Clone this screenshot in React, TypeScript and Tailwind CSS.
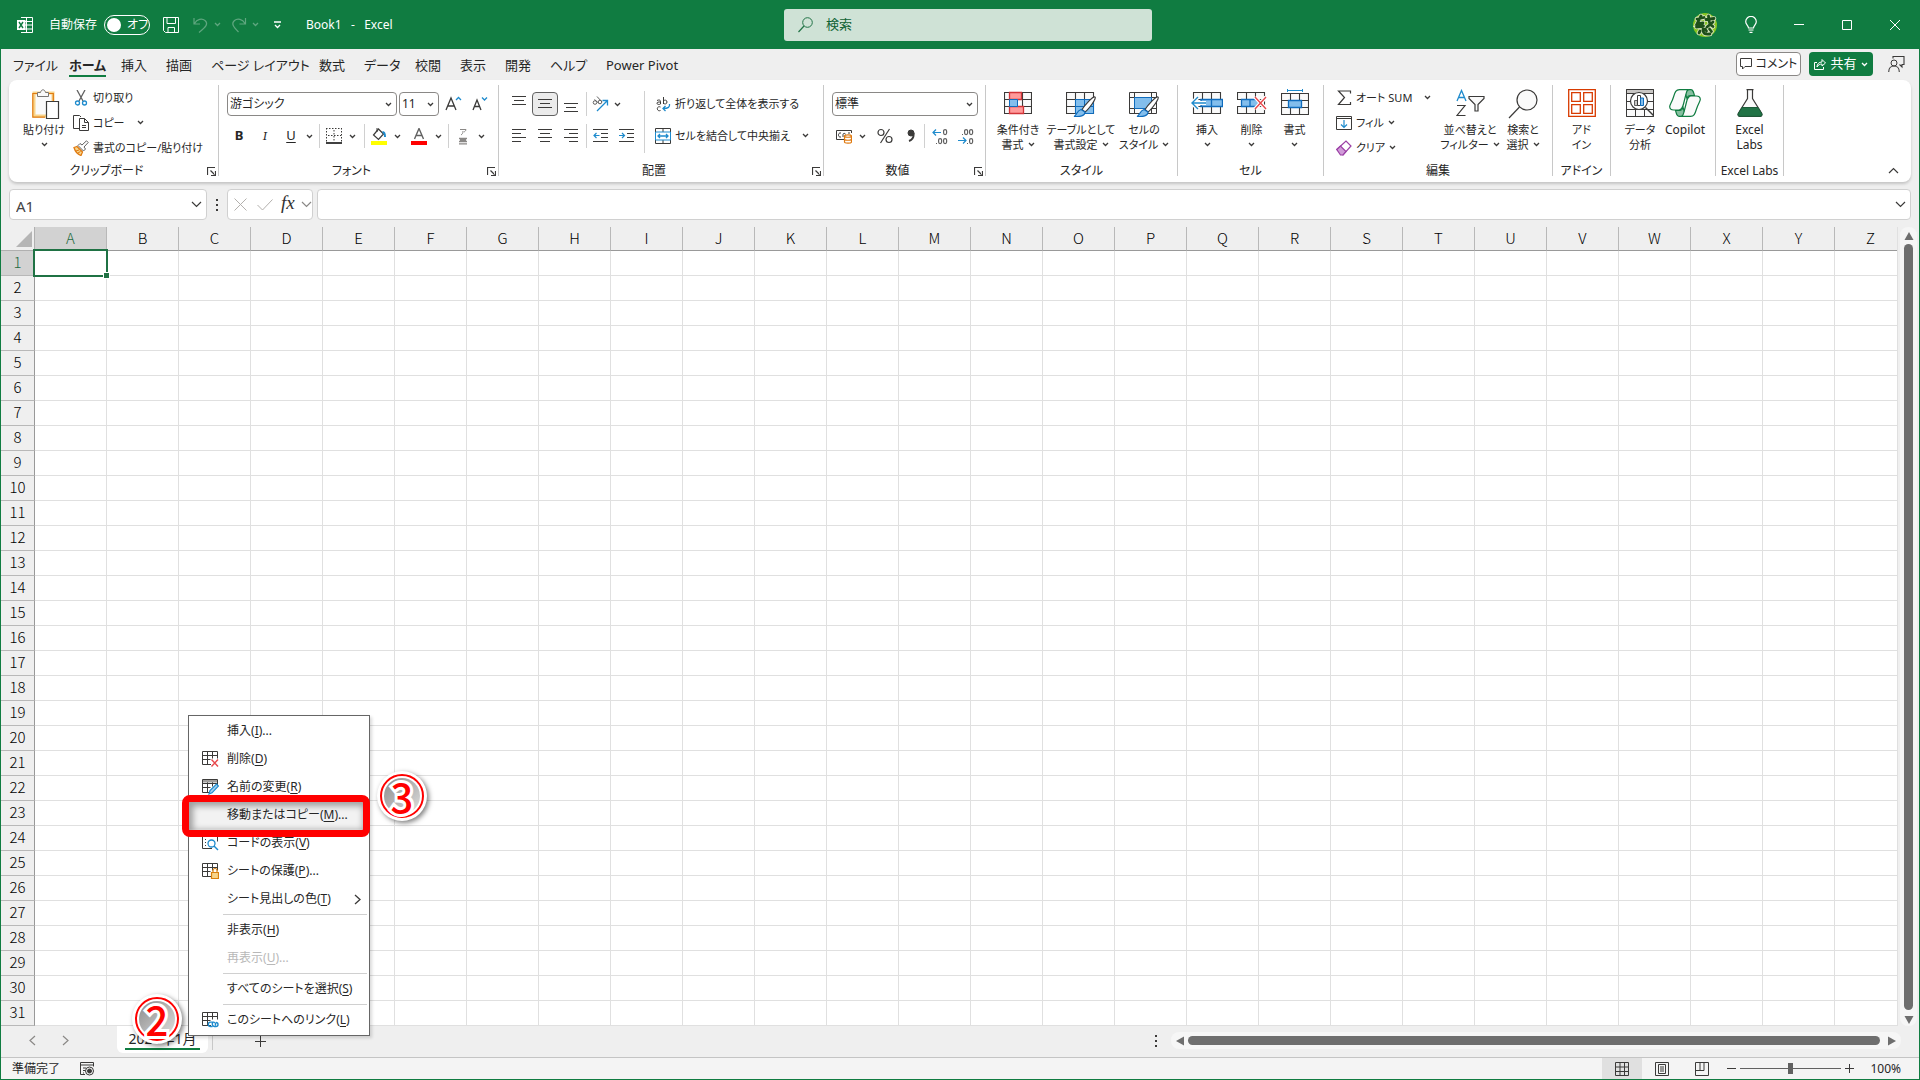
import type { ReactNode } from 'react'

const INK = '#3b3a39'
const BLUE = '#1e8bcd'

interface TabItem {
  label: string
  width: string
}

const ribbonTabs: TabItem[] = [
  { label: 'ファイル', width: 'w-14' },
  { label: 'ホーム', width: 'w-[52px]' },
  { label: '挿入', width: 'w-[45px]' },
  { label: '描画', width: 'w-[45px]' },
  { label: 'ページ レイアウト', width: 'w-[108px]' },
  { label: '数式', width: 'w-[45px]' },
  { label: 'データ', width: 'w-[51px]' },
  { label: '校閲', width: 'w-[45px]' },
  { label: '表示', width: 'w-[45px]' },
  { label: '開発', width: 'w-[45px]' },
  { label: 'ヘルプ', width: 'w-14' },
  { label: 'Power Pivot', width: 'w-[100px]' },
]

const columns = 'ABCDEFGHIJKLMNOPQRSTUVWXYZ'.split('')
const rows = Array.from({ length: 31 }, (_, i) => i + 1)

function Icon({ w = 16, h = 16, children }: { w?: number; h?: number; children: ReactNode }) {
  return (
    <svg width={w} height={h} viewBox={`0 0 ${w} ${h}`} fill="none" stroke={INK} className="shrink-0" aria-hidden="true">
      {children}
    </svg>
  )
}

function Chevron({ color = INK }: { color?: string }) {
  return (
    <Icon w={7} h={5}>
      <path d="M1 1l2.5 2.5L6 1" stroke={color} strokeWidth="1.3" />
    </Icon>
  )
}

function WideChevron({ color = INK }: { color?: string }) {
  return (
    <Icon w={11} h={7}>
      <path d="M1 1l4.500 4.500L10 1" stroke={color} strokeWidth="1.2" />
    </Icon>
  )
}

/* ---------- clipboard ---------- */

function PasteIcon() {
  return (
    <Icon w={32} h={30}>
      <g transform="translate(4 0)">
        <path d="M2 4h19v23H2z" fill="#fafafa" stroke="#f8d48a" strokeWidth="3" />
        <path d="M7 4.500H.8v23.700H13M15 4.500h6.300V12" stroke="#e07a10" strokeWidth="1.200" />
        <path d="M5.500 7.500v-4h3c.5-2 1.500-2.700 2.500-2.700s2 .7 2.500 2.700h3v4z" fill="#fafafa" stroke="#797774" />
        <path d="M14.500 12.500h12v17h-12z" fill="#fff" stroke={INK} strokeWidth="1.200" />
      </g>
    </Icon>
  )
}

function CutIcon() {
  return (
    <Icon>
      <path d="M4 0l6 11M12 0L6 11" stroke="#616161" strokeWidth="1.300" />
      <circle cx="4.500" cy="13" r="2" stroke={BLUE} strokeWidth="1.300" />
      <circle cx="11.500" cy="13" r="2" stroke={BLUE} strokeWidth="1.300" />
    </Icon>
  )
}

function CopyIcon() {
  return (
    <Icon>
      <path d="M6 13.500H.5V.5h6l1.500 1.500" />
      <path d="M6.500 3.500h5l4 4v8h-9zM11.500 3.500v4h4M9 10.500h4M9 12.500h4" fill="#fff" />
    </Icon>
  )
}

function BrushIcon() {
  return (
    <Icon>
      <path d="M1 7.500l3-1 5.500 5.500-1.500 3.500c-3-1-6-4.500-7-8z" fill="#f8d48a" stroke="#e07a10" strokeWidth="1.300" />
      <path d="M5 5.500l2-2 2 1.500L13.500.8l1.700 1.700L11 7l1.500 2-2 2z" fill="#fff" stroke="#616161" />
      <path d="M3 11l3-1M5 13l2.500-1.500" stroke="#e07a10" />
    </Icon>
  )
}

/* ---------- font ---------- */

function BordersIcon() {
  return (
    <Icon>
      <path d="M.5 0v14M15.500 0v14M0 .5h16M8 2v12M2 7.500h13" strokeDasharray="1.500 1.500" />
      <path d="M0 15h16" strokeWidth="1.500" stroke="#000" />
    </Icon>
  )
}

function FillIcon() {
  return (
    <Icon w={16} h={17}>
      <path d="M7.500 1l5 5-5 5.500L2.500 7z" strokeWidth="1.200" fill="#fff" />
      <path d="M6 0v4" />
      <path d="M11.500 4c2 0 2.500 1.500 2.500 5" stroke={BLUE} strokeWidth="2" />
      <path d="M0 15h16" stroke="#ffff00" strokeWidth="4" />
    </Icon>
  )
}

function FontColorIcon() {
  return (
    <Icon w={16} h={17}>
      <path d="M3.500 11L8 .5l4.500 10.500M5 7.500h6" stroke="#616161" strokeWidth="1.400" />
      <path d="M0 15h16" stroke="#ff0000" strokeWidth="4" />
    </Icon>
  )
}

function PhoneticIcon() {
  return (
    <Icon w={12} h={17}>
      <path d="M3 1.500h6c0 1-1 2-2 2.500M6 3c0 2-.5 3-2 4" stroke="#8a8886" />
      <path d="M2 10.500h8M2 13.500h8M2 15.800h8M3 12h6" stroke="#8a8886" strokeWidth="1.300" />
    </Icon>
  )
}

function FontSizeIcon({ grow }: { grow?: boolean }) {
  return grow ? (
    <Icon w={17} h={16}>
      <path d="M1 14L6 2l5 12M3 10h6" strokeWidth="1.300" />
      <path d="M11 4l2.500-2.500L16 4" stroke={BLUE} strokeWidth="1.300" />
    </Icon>
  ) : (
    <Icon w={17} h={16}>
      <path d="M1 14L5 4l4 10M2.500 10.500h5" strokeWidth="1.300" />
      <path d="M10 1.500L12.500 4 15 1.500" stroke={BLUE} strokeWidth="1.300" />
    </Icon>
  )
}

/* ---------- alignment ---------- */

function LinesIcon({ d }: { d: string }) {
  return (
    <Icon w={14} h={16}>
      <path d={d} strokeWidth="1" />
    </Icon>
  )
}

function OrientationIcon() {
  return (
    <Icon w={17} h={16}>
      <circle cx="3" cy="6.500" r="1.800" stroke="#616161" />
      <path d="M2.500 3.500l4 3.500M5 .5l5 5.500" stroke="#616161" />
      <circle cx="8" cy="6" r="1.800" stroke="#616161" />
      <path d="M5 15L15.500 4.500M10.500 4.500h5v5" stroke={BLUE} strokeWidth="1.300" />
    </Icon>
  )
}

function IndentIcon({ out }: { out?: boolean }) {
  return (
    <Icon w={15} h={14}>
      <path d="M0 .5h15M8 4.500h7M8 8.500h7M0 12.500h15" />
      <path d={out ? 'M6.500 6.500H1M3.500 4L1 6.500 3.500 9' : 'M0 6.500h5.500M3 4l2.500 2.500L3 9'} stroke={BLUE} strokeWidth="1.200" />
    </Icon>
  )
}

function WrapIcon() {
  return (
    <Icon>
      <path d="M2 4.500c2-1 3.500-.5 3.500 1V8c-1 .7-3.500.7-3.500-.7s1.500-1.300 3.500-1.300" />
      <path d="M8.500 1v7M8.500 5c1-1.300 3.500-1.200 3.500 1s-2.500 2.500-3.500 1" />
      <path d="M5.500 11C4 10.300 2.300 11 2.300 12.700S4 15.200 5.500 14.500" />
      <path d="M14.500 8c.5 3-1 4.500-6.500 4.500M10.500 10L8 12.500l2.500 2.500" stroke={BLUE} strokeWidth="1.300" />
    </Icon>
  )
}

function MergeIcon() {
  return (
    <Icon>
      <path d="M.5.5h15v15H.5zM8 .5v4M8 12v3.500" />
      <path d="M.5 4h15v8H.5z" fill="#fff" stroke={BLUE} />
      <path d="M3 8h10M5 6L3 8l2 2M11 6l2 2-2 2" stroke={BLUE} strokeWidth="1.300" />
    </Icon>
  )
}

/* ---------- number ---------- */

function CurrencyIcon() {
  return (
    <Icon>
      <path d="M8 11.500H.5v-9h15V5M5 5C3 4.500 2.500 6 2.500 7S3 9.500 5 9M7 9V6.500C7 5 9.500 5 9.500 6.500M12 5h2" />
      <path d="M8.500 8c0-1.500 7-1.500 7 0v6c0 1.500-7 1.500-7 0z" fill="#fff" stroke="#e07a10" strokeWidth="1.200" />
      <path d="M8.500 8.500c1 1 6 1 7 0M8.500 11.500c1 1 6 1 7 0" stroke="#e07a10" strokeWidth="1.200" />
    </Icon>
  )
}

function DecimalIcon({ more }: { more?: boolean }) {
  return (
    <Icon w={16} h={17}>
      <g stroke="#616161" strokeWidth="1.200">
        {more ? (
          <>
            <rect x="11.600" y="1.600" width="3" height="5" rx="1.500" />
            <rect x="6.600" y="10.600" width="3" height="5" rx="1.500" />
            <rect x="11.600" y="10.600" width="3" height="5" rx="1.500" />
            <path d="M4 15.500h1" />
          </>
        ) : (
          <>
            <rect x="6.600" y="1.600" width="3" height="5" rx="1.500" />
            <rect x="11.600" y="1.600" width="3" height="5" rx="1.500" />
            <rect x="11.600" y="10.600" width="3" height="5" rx="1.500" />
            <path d="M4 6.500h1M9 15.500h1" />
          </>
        )}
        <path d={more ? 'M9 4.500H1M4 1.500l-3 3 3 3' : 'M0 12.500h8M5 9.500l3 3-3 3'} stroke={BLUE} />
      </g>
    </Icon>
  )
}

/* ---------- styles and cells ---------- */

function GridFrame() {
  return <path d="M.5.5h27v21H.5zM.5 7.500h27M.5 14.500h27M9.500.5v21M18.500.5v21" fill="#fafafa" strokeWidth="1.100" />
}

function ConditionalIcon() {
  return (
    <Icon w={28} h={28}>
      <g transform="translate(0 3)">
        <GridFrame />
        <path d="M5.500.5h12v7h-12zM5.500 14.500h14v7h-14z" fill="#ff9a9a" stroke="#d13438" strokeWidth="1.300" />
        <path d="M5.500 7.500h8v7h-8z" fill="#83beec" stroke="#0f6cbd" />
      </g>
    </Icon>
  )
}

function BigBrush() {
  return (
    <>
      <path d="M29 8c2 1-6 12-10 15l-3-2.500C19 16 27 7 29 8z" fill="#fff" strokeWidth="1.200" />
      <path d="M19 23c0 4-5 5-11 4.500 3-1 2.500-6 7-7z" fill="#83beec" stroke="#0f6cbd" strokeWidth="1.200" />
    </>
  )
}

function TableFormatIcon() {
  return (
    <Icon w={31} h={28}>
      <g transform="translate(0 3)">
        <GridFrame />
        <path d="M9.500 7.500h18v14h-18zM18.500 7.500v14M9.500 14.500h18" fill="#83beec" stroke="#0f6cbd" />
      </g>
      <BigBrush />
    </Icon>
  )
}

function CellStyleIcon() {
  return (
    <Icon w={31} h={28}>
      <g transform="translate(0 3)">
        <path d="M.5.5h27v21H.5zM.5 5.500h27M.5 16.500h27M5.500.5v21M22.500.5v21" fill="#fafafa" />
        <path d="M5.500 5.500h17v11h-17z" fill="#83beec" stroke="#0f6cbd" />
      </g>
      <BigBrush />
    </Icon>
  )
}

function InsertCellsIcon() {
  return (
    <Icon w={32} h={28}>
      <g transform="translate(2 3)">
        <GridFrame />
        <path d="M8 7.500h21.500v7H8zM18.500 7.500v7" fill="#83beec" stroke="#0f6cbd" strokeWidth="1.300" />
        <path d="M13 11H-1M5 5l-6 6 6 6" stroke="#fff" strokeWidth="4" />
        <path d="M13 11H-1M5 5l-6 6 6 6" stroke={BLUE} strokeWidth="1.400" />
      </g>
    </Icon>
  )
}

function DeleteCellsIcon() {
  return (
    <Icon w={30} h={28}>
      <g transform="translate(0 3)">
        <GridFrame />
        <path d="M0 8h4v6H0z" fill="#fff" stroke="none" />
        <path d="M4.500 7.500h14l4 3.500-4 3.500h-14zM13 7.500v7" fill="#83beec" stroke="#0f6cbd" strokeWidth="1.300" />
        <path d="M18 5l11 12M29 5L18 17" stroke="#fff" strokeWidth="4" />
        <path d="M18 5l11 12M29 5L18 17" stroke="#e8484c" strokeWidth="1.400" />
      </g>
    </Icon>
  )
}

function FormatCellsIcon() {
  return (
    <Icon w={28} h={28}>
      <g transform="translate(0 4)">
        <GridFrame />
        <path d="M7.500 7.500h13v7h-13z" fill="#83beec" stroke="#0f6cbd" strokeWidth="1.300" />
      </g>
      <path d="M6.500 1.500h15M6.500 0v3M21.500 0v3" stroke={BLUE} />
    </Icon>
  )
}

/* ---------- editing, add-ins ---------- */

function SortIcon() {
  return (
    <Icon w={29} h={28}>
      <path d="M1 12L5.500 1.500 10 12M2.500 8.500h6" stroke={BLUE} strokeWidth="1.300" />
      <path d="M1 16.500h8L1 26.500h8.500" strokeWidth="1.200" />
      <path d="M13 7.500h15v2l-6 6v6.500h-3v-6.500l-6-6z" strokeWidth="1.200" fill="#fafafa" />
    </Icon>
  )
}

function FindIcon() {
  return (
    <Icon w={30} h={30}>
      <circle cx="19" cy="11" r="10" strokeWidth="1.200" fill="#fafafa" />
      <path d="M11.500 18L1 29" strokeWidth="1.200" />
    </Icon>
  )
}

function SumIcon() {
  return (
    <Icon>
      <path d="M14.500 3.500V1h-12l6 6.500-6 7h12V12" strokeWidth="1.200" />
    </Icon>
  )
}

function FillDownIcon() {
  return (
    <Icon>
      <path d="M.5 1.500h15v13H.5zM.5 3.500h15" />
      <path d="M8 5v7.500M5 9.500l3 3 3-3" stroke={BLUE} strokeWidth="1.200" />
    </Icon>
  )
}

function EraserIcon() {
  return (
    <Icon>
      <path d="M.8 9.500L10 1l5 5-8 9z" fill="#fff" stroke="#9b3fa5" strokeWidth="1.200" />
      <path d="M.8 9.500L4.500 6l5.500 5.500L7 15H4.500z" fill="#d09bd8" stroke="#9b3fa5" strokeWidth="1.200" />
    </Icon>
  )
}

function AddinIcon() {
  return (
    <Icon w={28} h={28}>
      <path d="M.7.7h26.600v26.600H.7zM3.700 3.700h8.600v8.600H3.700zM15.700 3.700h8.600v8.600h-8.600zM3.700 15.700h8.600v8.600H3.700zM15.700 15.700h8.600v8.600h-8.600z" stroke="#d83b01" strokeWidth="1.300" />
    </Icon>
  )
}

function AnalyzeIcon() {
  return (
    <Icon w={28} h={28}>
      <path d="M.5.5h27v27H.5z" fill="#fafafa" />
      <path d="M1 1h26v3H1z" fill="#c8c6c4" stroke="none" />
      <path d="M.5 4.500h27M.5 12.500h27M.5 20.500h27M9.500 20.500v7M18.500 20.500v7" />
      <path d="M.5.5h27v27H.5z" />
      <circle cx="13" cy="12" r="8.500" fill="#fff" strokeWidth="1.200" />
      <path d="M19.500 18.500l8 8" strokeWidth="1.500" />
      <path d="M8.500 11.500h3v5h-3z" fill="#c8c6c4" stroke="#616161" />
      <path d="M11.500 6.500h3v10h-3z" fill="#fff" />
      <path d="M14.500 9h3v7.500h-3z" fill="#83beec" stroke="#0f6cbd" />
    </Icon>
  )
}

function CopilotIcon() {
  return (
    <Icon w={32} h={28}>
      <g stroke="#107c41" strokeWidth="1.200">
        <path d="M15 .7h7c2 0 2.500 2 3.500 6h-4c-2 0-3 1-3.500 3z" fill="#86bfa0" />
        <path d="M17 27.300h-7c-2 0-2.500-2-3.500-6h4c2 0 3-1 3.500-3z" fill="#86bfa0" />
        <path d="M19.500.7H10.500C7 .7 6 3 4.500 8S.7 16 .7 17.500c0 2.500 1.500 3.500 4 3.500h5c3 0 3.800-2 4.800-6L17 5c.7-2.700 1-4 2.500-4.300z" fill="#fafafa" />
        <path d="M12.500 27.300h9c3.500 0 4.500-2.300 6-7.300s3.800-8 3.800-9.500c0-2.500-1.500-3.500-4-3.500h-5c-3 0-3.800 2-4.800 6L15 23c-.7 2.700-1 4-2.500 4.300z" fill="#fafafa" />
      </g>
    </Icon>
  )
}

function FlaskIcon() {
  return (
    <Icon w={26} h={28}>
      <path d="M9.500.7h7M10.500 1v8.500L1.500 24c-1 2 0 3.300 1.500 3.300h20c1.500 0 2.500-1.300 1.500-3.300l-9-14.500V1" fill="#fafafa" strokeWidth="1.200" />
      <path d="M5 18.500h16l4 6.500c.3 1.500-.5 2.300-2 2.300H3c-1.500 0-2.300-.8-2-2.300z" fill="#217346" stroke="#1c5c39" />
    </Icon>
  )
}

/* ---------- sheet menu ---------- */

function SheetIcon({ children }: { children: ReactNode }) {
  return (
    <Icon w={17} h={16}>
      <path d="M9 13.500H.5V.5h15v7M.5 4.500h15M.5 8.500h8M5.500.5v13M10.500.5v7" />
      {children}
    </Icon>
  )
}

function DeleteSheetIcon() {
  return (
    <SheetIcon>
      <path d="M9.500 8.500l6.500 7M16 8.500l-6.500 7" stroke="#e8484c" strokeWidth="1.400" />
    </SheetIcon>
  )
}

function RenameSheetIcon() {
  return (
    <SheetIcon>
      <path d="M1 1h14v2.500H1z" fill="#a19f9d" stroke="none" />
      <path d="M7 15l1-3.500 6.500-6.500 2 2L10 13.800z" fill="#9fd0f0" stroke={BLUE} strokeWidth="1.200" />
    </SheetIcon>
  )
}

function ViewCodeIcon() {
  return (
    <Icon w={17} h={16}>
      <path d="M10 13.500H.5V.5h15v6M3 4.500h1M3 7.500h1M3 10.500h1M6 7.500h1" />
      <circle cx="9.500" cy="8.500" r="3.500" stroke={BLUE} strokeWidth="1.300" fill="#fff" />
      <path d="M12 11l4 4" stroke={BLUE} strokeWidth="1.500" />
    </Icon>
  )
}

function ProtectSheetIcon() {
  return (
    <SheetIcon>
      <path d="M9.500 9.500h7v6h-7z" fill="#f8d48a" stroke="#d9800f" strokeWidth="1.200" />
      <path d="M11 9V7.500a2 2 0 014 0V9" stroke="#d9800f" strokeWidth="1.200" />
    </SheetIcon>
  )
}

function LinkSheetIcon() {
  return (
    <SheetIcon>
      <path d="M10.500 14.500H8.500a2.200 2.200 0 010-4.400h3a2 2 0 011.500 3.400M11 10.500a2 2 0 00-.5 2.500c.5 1 1.200 1.500 2 1.500h1.500a2 2 0 000-4" stroke={BLUE} strokeWidth="1.400" />
    </SheetIcon>
  )
}

function Avatar() {
  return (
    <svg width="24" height="24" viewBox="0 0 24 24" fill="none" className="shrink-0" aria-hidden="true">
      <circle cx="12" cy="12" r="12" fill="#86c51f" />
      <g stroke="#d9e6c0" strokeWidth="4.500" strokeLinecap="round">
        <path d="M4 6l7-1.500M8 3L4 11l6-1M3.500 14l7-1M13 6.500l8-1M15.500 3c0 6 1 9 4.500 10.500M20 9l-6 5M7 18l-1 2M10 16c0 5 2 5.500 7 5M12 16l1.500 2M16.500 16l2 2.500" />
      </g>
      <g stroke="#1d4f1a" strokeWidth="2.800" strokeLinecap="round">
        <path d="M4 6l7-1.500M8 3L4 11l6-1M3.500 14l7-1M13 6.500l8-1M15.500 3c0 6 1 9 4.500 10.500M20 9l-6 5M7 18l-1 2M10 16c0 5 2 5.500 7 5M12 16l1.500 2M16.500 16l2 2.500" />
      </g>
    </svg>
  )
}

/* ---------- ribbon building blocks ---------- */

function Group({
  label,
  width,
  launcher,
  children,
}: {
  label: string
  width: string
  launcher?: boolean
  children: ReactNode
}) {
  return (
    <section aria-label={label || undefined} className={`relative shrink-0 flex flex-col border-r border-[#c8c8c8] ${width}`}>
      <div className="flex-1 flex">{children}</div>
      <p className={`h-[15px] mb-[-2px] text-center leading-[15px] whitespace-nowrap ${launcher ? 'pr-3.5' : ''}`}>{label}</p>
      {launcher && (
        <button className="absolute right-0.5 bottom-0" aria-label={`${label}の設定`}>
          <Icon w={9} h={9}>
            <path d="M.5 8V.5H8M3.500 3.500l4 4M8.500 4v4.500H4" strokeWidth="1.200" />
          </Icon>
        </button>
      )}
    </section>
  )
}

function BigButton({
  icon,
  lines,
  width,
  drop,
  latin,
}: {
  icon: ReactNode
  lines: string[]
  width: string
  drop?: boolean
  latin?: boolean
}) {
  return (
    <button
      className={`shrink-0 flex flex-col items-center pt-1 leading-[15px] whitespace-nowrap ${
        latin ? 'text-xs' : 'text-[11px]'
      } ${width}`}
    >
      <span className="h-[33px]">{icon}</span>
      {lines.map((line, i) => (
        <span key={line} className="flex items-center gap-1">
          {line}
          {drop && lines.length > 1 && i === lines.length - 1 && <Chevron />}
        </span>
      ))}
      {drop && lines.length === 1 && (
        <span className="h-[15px] flex items-center">
          <Chevron />
        </span>
      )}
    </button>
  )
}

function SmallButton({ icon, label, drop }: { icon: ReactNode; label: string; drop?: string }) {
  return (
    <button className="h-[25px] flex items-center gap-1 whitespace-nowrap text-[11px] leading-4">
      {icon}
      <span>{label}</span>
      {drop && (
        <span className={drop}>
          <Chevron />
        </span>
      )}
    </button>
  )
}

function Tool({ label, width, active, children }: { label: string; width: string; active?: boolean; children: ReactNode }) {
  return (
    <button
      aria-label={label}
      className={`shrink-0 h-6 flex items-center justify-center rounded ${width} ${
        active ? 'border border-[#616161] bg-[#ebebeb]' : ''
      }`}
    >
      {children}
    </button>
  )
}

function Sep({ width }: { width: string }) {
  return (
    <span className={`shrink-0 h-6 flex justify-center ${width}`}>
      <span className="w-px bg-[#d0d0d0]" />
    </span>
  )
}

function Combo({ label, options, width }: { label: string; options: string[]; width: string }) {
  return (
    <div className={`h-6 shrink-0 flex items-center rounded border border-[#8a8886] bg-white pr-1 ${width}`}>
      <select aria-label={label} className="flex-1 min-w-0 appearance-none bg-transparent pl-0.5 leading-[20px] outline-none">
        {options.map(o => (
          <option key={o}>{o}</option>
        ))}
      </select>
      <Chevron />
    </div>
  )
}

function TitleBar() {
  return (
    <header className="h-[49px] bg-[#107c41] text-white flex items-center pb-2">
      <div className="flex-1 flex items-center pl-4 pt-2">
        <Icon>
          <g stroke="#fff">
            <path d="M4 .5h11.500v15H4M9.500.5v15M4 4.500h11.500M8 8h7.500M4 12h11.500" />
            <path d="M0 3h8.500v10H0z" fill="#fff" stroke="none" />
            <path d="M2 5l4 6M6 5l-4 6" stroke="#107c41" strokeWidth="1.400" />
          </g>
        </Icon>
        <label className="ml-4 flex items-center gap-[7px] leading-[18px]">
          自動保存
          <input type="checkbox" className="sr-only" />
          <span className="w-[46px] h-5 rounded-full border border-white flex items-center gap-1.5 pl-0.5">
            <span className="w-3.5 h-3.5 rounded-full bg-white" />
            オフ
          </span>
        </label>
        <button className="ml-[13px]" aria-label="上書き保存">
          <Icon>
            <path d="M.5.5h15v15H2.500l-2-2zM4 .5v6h8.500v-6M5 15.500v-5h6.500v5" stroke="#fff" />
          </Icon>
        </button>
        <button className="ml-3.5 w-7 flex items-center justify-between" aria-label="元に戻す">
          <Icon>
            <path d="M1 1v6h6M1.500 6.500C4 2 9 1 12 3.500c3.500 3 1.500 6-6 12" stroke="#5fa67f" strokeWidth="1.200" />
          </Icon>
          <Chevron color="#5fa67f" />
        </button>
        <button className="ml-2.5 w-7 flex items-center justify-between" aria-label="やり直し">
          <Icon>
            <path d="M14.500 1v6h-6M14 6.500C11.500 2 6.500 1 3.500 3.500c-3.500 3-1.500 6 4 11.500" stroke="#5fa67f" strokeWidth="1.200" />
          </Icon>
          <Chevron color="#5fa67f" />
        </button>
        <button className="ml-3.5" aria-label="クイック アクセス ツール バーのカスタマイズ">
          <Icon w={9} h={8}>
            <path d="M1 1h7M2 4l2.500 2.500L7 4" stroke="#fff" strokeWidth="1.300" />
          </Icon>
        </button>
        <h1 className="ml-6 leading-[18px] whitespace-pre">Book1   -   Excel</h1>
      </div>
      <label className="w-[368px] h-8 mt-2 rounded-[3px] bg-[#cfe2d6] flex items-center gap-3 pl-3.5">
        <Icon>
          <circle cx="9.500" cy="5.500" r="4.800" stroke="#217346" />
          <path d="M6 9L.5 15" stroke="#217346" strokeWidth="1.200" />
        </Icon>
        <input
          type="search"
          aria-label="検索"
          placeholder="検索"
          className="flex-1 min-w-0 bg-transparent text-[13px] outline-none placeholder:text-[#0f6334]"
        />
      </label>
      <div className="flex-1 flex items-center justify-end pt-2">
        <button className="w-11 flex justify-center" aria-label="アカウント">
          <Avatar />
        </button>
        <button className="w-12 flex justify-center" aria-label="ヒント">
          <Icon w={12} h={17}>
            <path d="M3.500 12c0-2.500-2.800-3.500-2.800-6.300a5.300 5.300 0 0110.600 0c0 2.800-2.800 3.800-2.800 6.300zM3.500 14h5M4.500 16.300h3" stroke="#fff" strokeWidth="1.200" />
          </Icon>
        </button>
        <button className="w-12 flex justify-center" aria-label="最小化">
          <Icon w={10} h={10}>
            <path d="M0 4.500h10" stroke="#fff" />
          </Icon>
        </button>
        <button className="w-12 flex justify-center" aria-label="最大化">
          <Icon w={10} h={10}>
            <path d="M.5.5h9v9h-9z" stroke="#fff" />
          </Icon>
        </button>
        <button className="w-12 flex justify-center" aria-label="閉じる">
          <Icon w={10} h={10}>
            <path d="M0 0l10 10M10 0L0 10" stroke="#fff" />
          </Icon>
        </button>
      </div>
    </header>
  )
}

function RibbonTabs() {
  return (
    <nav className="h-[31px] flex items-start text-[13px]">
      <div className="flex-1 flex items-start pl-3 pt-[5px]">
        {ribbonTabs.map(({ label, width }) => (
          <button key={label} className={`shrink-0 text-left whitespace-nowrap leading-[22px] ${width}`}>
            {label === 'ホーム' ? (
              <span className="block w-fit h-[23px] border-b-2 border-[#107c41] font-bold">{label}</span>
            ) : (
              label
            )}
          </button>
        ))}
      </div>
      <div className="flex items-center pt-[3px] pr-3.5">
        <button className="w-[65px] h-6 rounded border border-[#8a8886] bg-white flex items-center justify-center gap-1 whitespace-nowrap text-xs">
          <Icon w={12} h={12}>
            <path d="M.5.5h11v8H5L2.500 11V8.500h-2z" />
          </Icon>
          コメント
        </button>
        <button className="ml-2 w-16 h-6 rounded bg-[#107c41] text-white flex items-center justify-center gap-1">
          <Icon w={12} h={12}>
            <path d="M3 4.500H.5v7h9V9M3 9c0-3 2-5 5-5V1.500l3.500 3.500L8 8V6C6 6 4 7 3 9z" stroke="#fff" />
          </Icon>
          共有
          <Chevron color="#fff" />
        </button>
        <button className="ml-[15px]" aria-label="共同編集">
          <Icon w={17} h={17}>
            <circle cx="6" cy="7" r="3" />
            <path d="M.7 16c0-8 10.600-8 10.600 0M5 2.500V.5h11v8h-2v2.500L11.500 8.500" strokeWidth="1.100" />
          </Icon>
        </button>
      </div>
    </nav>
  )
}

function Ribbon() {
  return (
    <div className="mx-2 h-[102px] pt-[5px] pb-1.5 bg-white rounded-lg shadow-[0_2px_3px_rgba(0,0,0,0.18)] flex">
      <Group label="クリップボード" width="w-[210px]" launcher>
        <span className="w-[9px]" />
        <BigButton icon={<PasteIcon />} lines={['貼り付け']} width="w-[52px]" drop />
        <div className="pl-[3px]">
          <SmallButton icon={<CutIcon />} label="切り取り" />
          <SmallButton icon={<CopyIcon />} label="コピー" drop="ml-2" />
          <SmallButton icon={<BrushIcon />} label="書式のコピー/貼り付け" />
        </div>
      </Group>

      <Group label="フォント" width="w-[280px]" launcher>
        <div className="pl-2 pt-[7px] flex flex-col gap-2">
          <div className="flex items-center">
            <Combo label="フォント名" options={['游ゴシック']} width="w-[170px]" />
            <span className="w-0.5" />
            <Combo label="フォント サイズ" options={['11']} width="w-10" />
            <Tool label="拡大" width="w-7"><FontSizeIcon grow /></Tool>
            <Tool label="縮小" width="w-[26px]"><FontSizeIcon /></Tool>
          </div>
          <div className="flex items-center text-[13px]">
            <Tool label="太字" width="w-6"><b>B</b></Tool>
            <Tool label="斜体" width="w-7"><i className="font-serif">I</i></Tool>
            <Tool label="下線" width="w-6"><u className="underline-offset-2">U</u></Tool>
            <Tool label="下線の種類" width="w-3"><Chevron /></Tool>
            <Sep width="w-2" />
            <Tool label="罫線" width="w-[21px]"><BordersIcon /></Tool>
            <Tool label="罫線の種類" width="w-4"><Chevron /></Tool>
            <Sep width="w-2" />
            <Tool label="塗りつぶし" width="w-[21px]"><FillIcon /></Tool>
            <Tool label="塗りつぶしの色" width="w-4"><Chevron /></Tool>
            <Tool label="フォントの色" width="w-7"><FontColorIcon /></Tool>
            <Tool label="フォントの色の選択" width="w-2.5"><Chevron /></Tool>
            <Sep width="w-2.5" />
            <Tool label="ふりがな" width="w-5"><PhoneticIcon /></Tool>
            <Tool label="ふりがなの設定" width="w-4"><Chevron /></Tool>
          </div>
        </div>
      </Group>

      <Group label="配置" width="w-[325px]" launcher>
        <div className="pl-[7px] pt-[7px] flex flex-col gap-2">
          <div className="flex items-center">
            <Tool label="上揃え" width="w-[26px]"><LinesIcon d="M0 .5h14M2 4.500h10M0 8.500h14" /></Tool>
            <Tool label="上下中央揃え" width="w-[26px]" active><LinesIcon d="M0 3.500h14M2 7.500h10M0 11.500h14" /></Tool>
            <Tool label="下揃え" width="w-[26px]"><LinesIcon d="M0 7.500h14M2 11.500h10M0 15.500h14" /></Tool>
            <Sep width="w-1" />
            <Tool label="方向" width="w-6"><OrientationIcon /></Tool>
            <Tool label="方向の種類" width="w-2.5"><Chevron /></Tool>
          </div>
          <div className="flex items-center">
            <Tool label="左揃え" width="w-[26px]"><LinesIcon d="M0 1.500h14M0 5.500h9M0 9.500h14M0 13.500h9" /></Tool>
            <Tool label="中央揃え" width="w-[26px]"><LinesIcon d="M0 1.500h14M2 5.500h10M0 9.500h14M2 13.500h10" /></Tool>
            <Tool label="右揃え" width="w-[26px]"><LinesIcon d="M0 1.500h14M5 5.500h9M0 9.500h14M5 13.500h9" /></Tool>
            <Sep width="w-1" />
            <Tool label="インデントを減らす" width="w-6"><IndentIcon out /></Tool>
            <Tool label="インデントを増やす" width="w-7"><IndentIcon /></Tool>
          </div>
        </div>
        <span className="ml-1 mt-1.5 w-px h-[62px] bg-[#d0d0d0]" />
        <div className="pl-2.5 pt-1.5 flex flex-col gap-[7px]">
          <SmallButton icon={<WrapIcon />} label="折り返して全体を表示する" />
          <SmallButton icon={<MergeIcon />} label="セルを結合して中央揃え" drop="ml-2" />
        </div>
      </Group>

      <Group label="数値" width="w-[162px]" launcher>
        <div className="pl-2 pt-[7px] flex flex-col gap-2">
          <Combo label="表示形式" options={['標準']} width="w-[146px]" />
          <div className="flex items-center">
            <Tool label="通貨表示形式" width="w-6"><CurrencyIcon /></Tool>
            <Tool label="通貨の種類" width="w-3"><Chevron /></Tool>
            <Tool label="パーセント" width="w-[34px]">
              <Icon>
                <circle cx="4" cy="4.500" r="3" strokeWidth="1.200" />
                <circle cx="12" cy="11.500" r="3" strokeWidth="1.200" />
                <path d="M12.500 1l-9 14" strokeWidth="1.200" />
              </Icon>
            </Tool>
            <Tool label="桁区切り" width="w-[18px]">
              <Icon w={8} h={14}>
                <circle cx="4" cy="4" r="3" fill={INK} />
                <path d="M6.500 4c.5 4-1.500 7-4.500 8" strokeWidth="2" />
              </Icon>
            </Tool>
            <Sep width="w-2" />
            <Tool label="小数点以下の表示桁数を増やす" width="w-6"><DecimalIcon more /></Tool>
            <Tool label="小数点以下の表示桁数を減らす" width="w-7"><DecimalIcon /></Tool>
          </div>
        </div>
      </Group>

      <Group label="スタイル" width="w-[192px]">
        <BigButton icon={<ConditionalIcon />} lines={['条件付き', '書式']} width="w-[64px]" drop />
        <BigButton icon={<TableFormatIcon />} lines={['テーブルとして', '書式設定']} width="w-[62px]" drop />
        <BigButton icon={<CellStyleIcon />} lines={['セルの', 'スタイル']} width="w-[64px]" drop />
      </Group>

      <Group label="セル" width="w-[146px]">
        <span className="w-1.5" />
        <BigButton icon={<InsertCellsIcon />} lines={['挿入']} width="w-[46px]" drop />
        <BigButton icon={<DeleteCellsIcon />} lines={['削除']} width="w-[43px]" drop />
        <BigButton icon={<FormatCellsIcon />} lines={['書式']} width="w-[43px]" drop />
      </Group>

      <Group label="編集" width="w-[229px]">
        <div className="pl-3 w-[118px]">
          <SmallButton icon={<SumIcon />} label="オート SUM" drop="ml-2" />
          <SmallButton icon={<FillDownIcon />} label="フィル" drop="ml-0" />
          <SmallButton icon={<EraserIcon />} label="クリア" drop="ml-0" />
        </div>
        <BigButton icon={<SortIcon />} lines={['並べ替えと', 'フィルター']} width="w-[56px]" drop />
        <BigButton icon={<FindIcon />} lines={['検索と', '選択']} width="w-[50px]" drop />
      </Group>

      <Group label="アドイン" width="w-[58px]">
        <BigButton icon={<AddinIcon />} lines={['アド', 'イン']} width="w-[57px]" />
      </Group>

      <Group label="" width="w-[105px]">
        <span className="w-[7px]" />
        <BigButton icon={<AnalyzeIcon />} lines={['データ', '分析']} width="w-11" />
        <BigButton icon={<CopilotIcon />} lines={['Copilot']} width="w-[46px]" latin />
      </Group>

      <Group label="Excel Labs" width="w-[68px]">
        <BigButton icon={<FlaskIcon />} lines={['Excel', 'Labs']} width="w-[67px]" latin />
      </Group>

      <div className="flex-1 flex items-end justify-end pr-3 pb-0.5">
        <button aria-label="リボンを折りたたむ">
          <Icon w={11} h={7}>
            <path d="M1 6l4.500-4.500L10 6" strokeWidth="1.200" />
          </Icon>
        </button>
      </div>
    </div>
  )
}

function FormulaBar() {
  return (
    <div className="pt-[7px] pb-[7px] pl-2 pr-2 flex h-[45px]">
      <div className="w-[198px] shrink-0 rounded border border-[#d0d0d0] bg-white flex items-center pl-1.5 pr-1">
        <input aria-label="名前ボックス" defaultValue="A1" className="flex-1 min-w-0 pt-0.5 bg-transparent text-[15px] text-[#444] outline-none" />
        <WideChevron />
      </div>
      <span className="w-5 shrink-0 flex items-center justify-center">
        <Icon w={2} h={12}>
          <path d="M0 1h2M0 6h2M0 11h2" strokeWidth="2" />
        </Icon>
      </span>
      <div className="w-[86px] shrink-0 rounded border border-[#d0d0d0] bg-white flex items-center pl-1.5">
        <button aria-label="キャンセル">
          <Icon w={13} h={13}>
            <path d="M.5.5l12 12M12.500.5l-12 12" stroke="#b3b0ad" />
          </Icon>
        </button>
        <button className="ml-2.5" aria-label="入力">
          <Icon w={16} h={12}>
            <path d="M.5 6l5 5L15.500.5" stroke="#b3b0ad" />
          </Icon>
        </button>
        <button className="ml-2 pb-1 font-['Liberation_Serif',serif] italic text-[19px] leading-5 text-[#333]" aria-label="関数の挿入">
          fx
        </button>
        <span className="ml-1.5">
          <WideChevron color="#8a8886" />
        </span>
      </div>
      <div className="ml-1 flex-1 rounded border border-[#d0d0d0] bg-white flex items-center pr-1">
        <input aria-label="数式バー" className="flex-1 bg-transparent px-2 text-[15px] outline-none" />
        <WideChevron />
      </div>
    </div>
  )
}

function Sheet() {
  return (
    <div className="flex">
      <div className="flex-1 min-w-0 overflow-hidden border-r border-[#e0e0e0]">
        <table className="w-[1906px] table-fixed border-separate border-spacing-0 text-[15px] leading-5 text-black font-['Noto_Sans_CJK_JP',sans-serif]">
          <thead>
            <tr className="h-6">
              <th className="w-[34px] p-0 border-r border-b border-[#b0b0b0] align-middle">
                <span className="flex justify-end pr-0.5">
                  <svg width="16" height="16" viewBox="0 0 16 16" aria-hidden="true">
                    <path d="M16 0v16H0z" fill="#b5b5b5" />
                  </svg>
                </span>
              </th>
              {columns.map(c => (
                <th
                  key={c}
                  scope="col"
                  className={`h-6 p-0 pb-0.5 border-r border-b border-b-[#999] border-r-[#b8b8b8] font-light ${
                    c === 'A' ? 'bg-[#d2d2d2] text-[#1f6b41]' : ''
                  }`}
                >
                  {c}
                </th>
              ))}
            </tr>
          </thead>
          <tbody>
            {rows.map(r => (
              <tr key={r}>
                <th
                  scope="row"
                  className={`h-[25px] p-0 pb-0.5 border-r border-b border-r-[#999] border-b-[#b8b8b8] font-light ${
                    r === 1 ? 'bg-[#d2d2d2] text-[#1f6b41]' : ''
                  }`}
                >
                  {r}
                </th>
                {columns.map(c => (
                  <td key={c} className="relative p-0 bg-white border-r border-b border-[#e0e0e0]">
                    {r === 1 && c === 'A' && (
                      <span className="absolute z-10 -inset-0.5 border-2 border-[#1f7244]">
                        <span className="absolute -right-1 -bottom-1 w-[7px] h-[7px] border border-white bg-[#1f7244]" />
                      </span>
                    )}
                  </td>
                ))}
              </tr>
            ))}
          </tbody>
        </table>
      </div>
      <div className="w-[21px] shrink-0 flex justify-center">
        <div className="w-[17px] h-full rounded-lg bg-[#f6f6f6] flex flex-col items-center justify-between pt-[5px] pb-0.5">
          <Icon w={10} h={8}>
            <path d="M5 0l4.500 8h-9z" fill="#6e6e6e" stroke="none" />
          </Icon>
          <div className="flex-1 mt-1 mb-1.5 w-[9px] rounded-full bg-[#6e6e6e]" />
          <Icon w={10} h={8}>
            <path d="M5 8L.5 0h9z" fill="#6e6e6e" stroke="none" />
          </Icon>
        </div>
      </div>
    </div>
  )
}

interface MenuEntry {
  label: string
  accessKey: string
  icon?: ReactNode
  dots?: boolean
  submenu?: boolean
  disabled?: boolean
  marked?: boolean
  divider?: boolean
}

const menuEntries: MenuEntry[] = [
  { label: '挿入', accessKey: 'I', dots: true },
  { label: '削除', accessKey: 'D', icon: <DeleteSheetIcon /> },
  { label: '名前の変更', accessKey: 'R', icon: <RenameSheetIcon /> },
  { label: '移動またはコピー', accessKey: 'M', dots: true, marked: true },
  { label: 'コードの表示', accessKey: 'V', icon: <ViewCodeIcon /> },
  { label: 'シートの保護', accessKey: 'P', icon: <ProtectSheetIcon />, dots: true },
  { label: 'シート見出しの色', accessKey: 'T', submenu: true },
  { label: '非表示', accessKey: 'H', divider: true },
  { label: '再表示', accessKey: 'U', dots: true, disabled: true },
  { label: 'すべてのシートを選択', accessKey: 'S', divider: true },
  { label: 'このシートへのリンク', accessKey: 'L', icon: <LinkSheetIcon />, divider: true },
]

function SheetMenu() {
  return (
    <div role="menu" className="absolute z-20 left-[187px] bottom-[21px] w-[182px] py-px border border-[#666] bg-white shadow-[2px_2px_3px_rgba(0,0,0,0.15)]">
      {menuEntries.map(e => (
        <div key={e.label} className="relative">
          {e.divider && <div className="ml-[34px] mr-0.5 my-px h-px bg-[#d0d0d0]" />}
          <button
            role="menuitem"
            disabled={e.disabled}
            className={`w-full h-7 flex items-center pl-[13px] pr-2 whitespace-nowrap ${e.disabled ? 'text-[#b8b8b8]' : ''} ${
              e.marked ? 'bg-[#f2f2f2]' : ''
            }`}
          >
            <span className="w-[25px] shrink-0">{e.icon}</span>
            <span>
              {e.label}(<u className="underline-offset-2">{e.accessKey}</u>){e.dots && '...'}
            </span>
            {e.submenu && (
              <span className="ml-auto">
                <Icon w={7} h={11}>
                  <path d="M1 1l5 4.500L1 10" strokeWidth="1.300" />
                </Icon>
              </span>
            )}
          </button>
          {e.marked && (
            <span className="absolute z-10 -left-[7px] -right-px -top-1.5 -bottom-2 rounded-lg border-[7px] border-[#ff0000] shadow-[inset_2px_2px_6px_2px_rgba(0,0,0,0.35)] pointer-events-none" />
          )}
        </div>
      ))}
    </div>
  )
}

/* numbered step bubble: white rim, red ring, grey core */
function Marker({ step, place }: { step: number; place: string }) {
  return (
    <span className={`absolute z-30 rounded-full bg-white p-[3px] shadow-[2px_2px_5px_rgba(0,0,0,0.5)] ${place}`}>
      <span className="block rounded-full border-2 border-[#ff0000] p-0.5">
        <span className="w-9 h-9 rounded-full bg-linear-to-br from-[#8c8c8c] to-[#e0e0e0] flex items-center justify-center text-[40px] leading-9 font-medium font-['Noto_Sans_CJK_JP',sans-serif] text-[#ff0000] [-webkit-text-stroke:6px_white] [paint-order:stroke_fill]">
          {step}
        </span>
      </span>
    </span>
  )
}

function SheetTabs() {
  return (
    <div className="relative h-8 border-b border-[#c4c4c4] flex items-start">
      <button className="ml-7 mt-[9px]" aria-label="前のシート">
        <Icon w={7} h={11}>
          <path d="M6 1L1 5.500 6 10" stroke="#8a8886" strokeWidth="1.200" />
        </Icon>
      </button>
      <button className="ml-[26px] mt-[9px]" aria-label="次のシート">
        <Icon w={7} h={11}>
          <path d="M1 1l5 4.500L1 10" stroke="#8a8886" strokeWidth="1.200" />
        </Icon>
      </button>
      <button className="ml-12 w-[91px] h-[27px] rounded-b-md bg-white flex justify-center text-sm leading-none">
        <span className="w-[75px] h-6 pt-1.5 border-b-2 border-[#107c41] text-center whitespace-nowrap">2024年1月</span>
      </button>
      <span className="ml-1 mt-1 w-px h-5 bg-[#c8c8c8]" />
      <button className="ml-[42px] mt-2.5" aria-label="新しいシート">
        <Icon w={11} h={11}>
          <path d="M5.500 0v11M0 5.500h11" />
        </Icon>
      </button>
      <div className="ml-auto mr-[18px] mt-1.5 flex items-center gap-[14px]">
        <Icon w={2} h={12}>
          <path d="M0 1h2M0 6h2M0 11h2" strokeWidth="2" />
        </Icon>
        <div className="w-[730px] h-[17px] rounded-lg bg-[#f6f6f6] flex items-center justify-between px-[5px]">
          <Icon w={8} h={10}>
            <path d="M0 5L8 .5v9z" fill="#6e6e6e" stroke="none" />
          </Icon>
          <div className="flex-1 ml-1 mr-2 h-[9px] rounded-full bg-[#6e6e6e]" />
          <Icon w={8} h={10}>
            <path d="M8 5L0 .5v9z" fill="#6e6e6e" stroke="none" />
          </Icon>
        </div>
      </div>

      <SheetMenu />
      <Marker step={2} place="left-[131px] -top-8" />
      <Marker step={3} place="left-[376px] bottom-[236px]" />
    </div>
  )
}

function StatusBar() {
  return (
    <footer className="h-[21px] bg-[#f4f4f4] flex items-center">
      <span className="ml-[11px] leading-4">準備完了</span>
      <button className="ml-5" aria-label="マクロの記録">
        <Icon w={15} h={14}>
          <path d="M5 12.500H.5V.5h13v4M.5 3h13M3 6h3M3 8.500h2M3 11h1" />
          <circle cx="9.500" cy="9" r="4" />
          <circle cx="9.500" cy="9" r="2" fill={INK} />
        </Icon>
      </button>
      <div className="ml-auto h-full flex items-center pr-[18px]">
        <button className="w-10 h-full bg-[#e0e0e0] flex items-center justify-center" aria-label="標準">
          <Icon w={14} h={14}>
            <path d="M.5.5h13v13H.5zM.5 5h13M.5 9.500h13M5 .5v13M9.500.5v13" />
          </Icon>
        </button>
        <button className="w-10 flex justify-center" aria-label="ページ レイアウト">
          <Icon w={14} h={14}>
            <path d="M.5.5h13v13H.5zM3.500 2.500h7v9h-7zM5 5h4M5 7h4M5 9h4" />
          </Icon>
        </button>
        <button className="w-10 flex justify-center" aria-label="改ページ プレビュー">
          <Icon w={14} h={14}>
            <path d="M.5.5h13v13H.5zM.5 8.500h8.500v-8M5 .5v8" />
          </Icon>
        </button>
        <button className="ml-[5px]" aria-label="縮小">
          <Icon w={9} h={9}>
            <path d="M0 4.500h9" />
          </Icon>
        </button>
        <input
          type="range"
          aria-label="ズーム"
          className="mx-1 w-[101px] h-[11px] appearance-none bg-transparent [&::-webkit-slider-runnable-track]:h-px [&::-webkit-slider-runnable-track]:bg-[#616161] [&::-webkit-slider-thumb]:appearance-none [&::-webkit-slider-thumb]:w-[5px] [&::-webkit-slider-thumb]:h-[11px] [&::-webkit-slider-thumb]:-mt-[5px] [&::-webkit-slider-thumb]:bg-[#616161]"
        />
        <button aria-label="拡大">
          <Icon w={9} h={9}>
            <path d="M0 4.500h9M4.500 0v9" />
          </Icon>
        </button>
        <span className="ml-3 w-[35px] text-right">100%</span>
      </div>
    </footer>
  )
}

export default function App() {
  return (
    <div className="min-h-screen overflow-hidden border-x border-b border-[#107c41] bg-[#efefef] text-xs text-[#262626] font-['Noto_Sans','Noto_Sans_CJK_JP',sans-serif] [font-feature-settings:'palt']">
      <TitleBar />
      <RibbonTabs />
      <Ribbon />
      <FormulaBar />
      <Sheet />
      <SheetTabs />
      <StatusBar />
    </div>
  )
}
